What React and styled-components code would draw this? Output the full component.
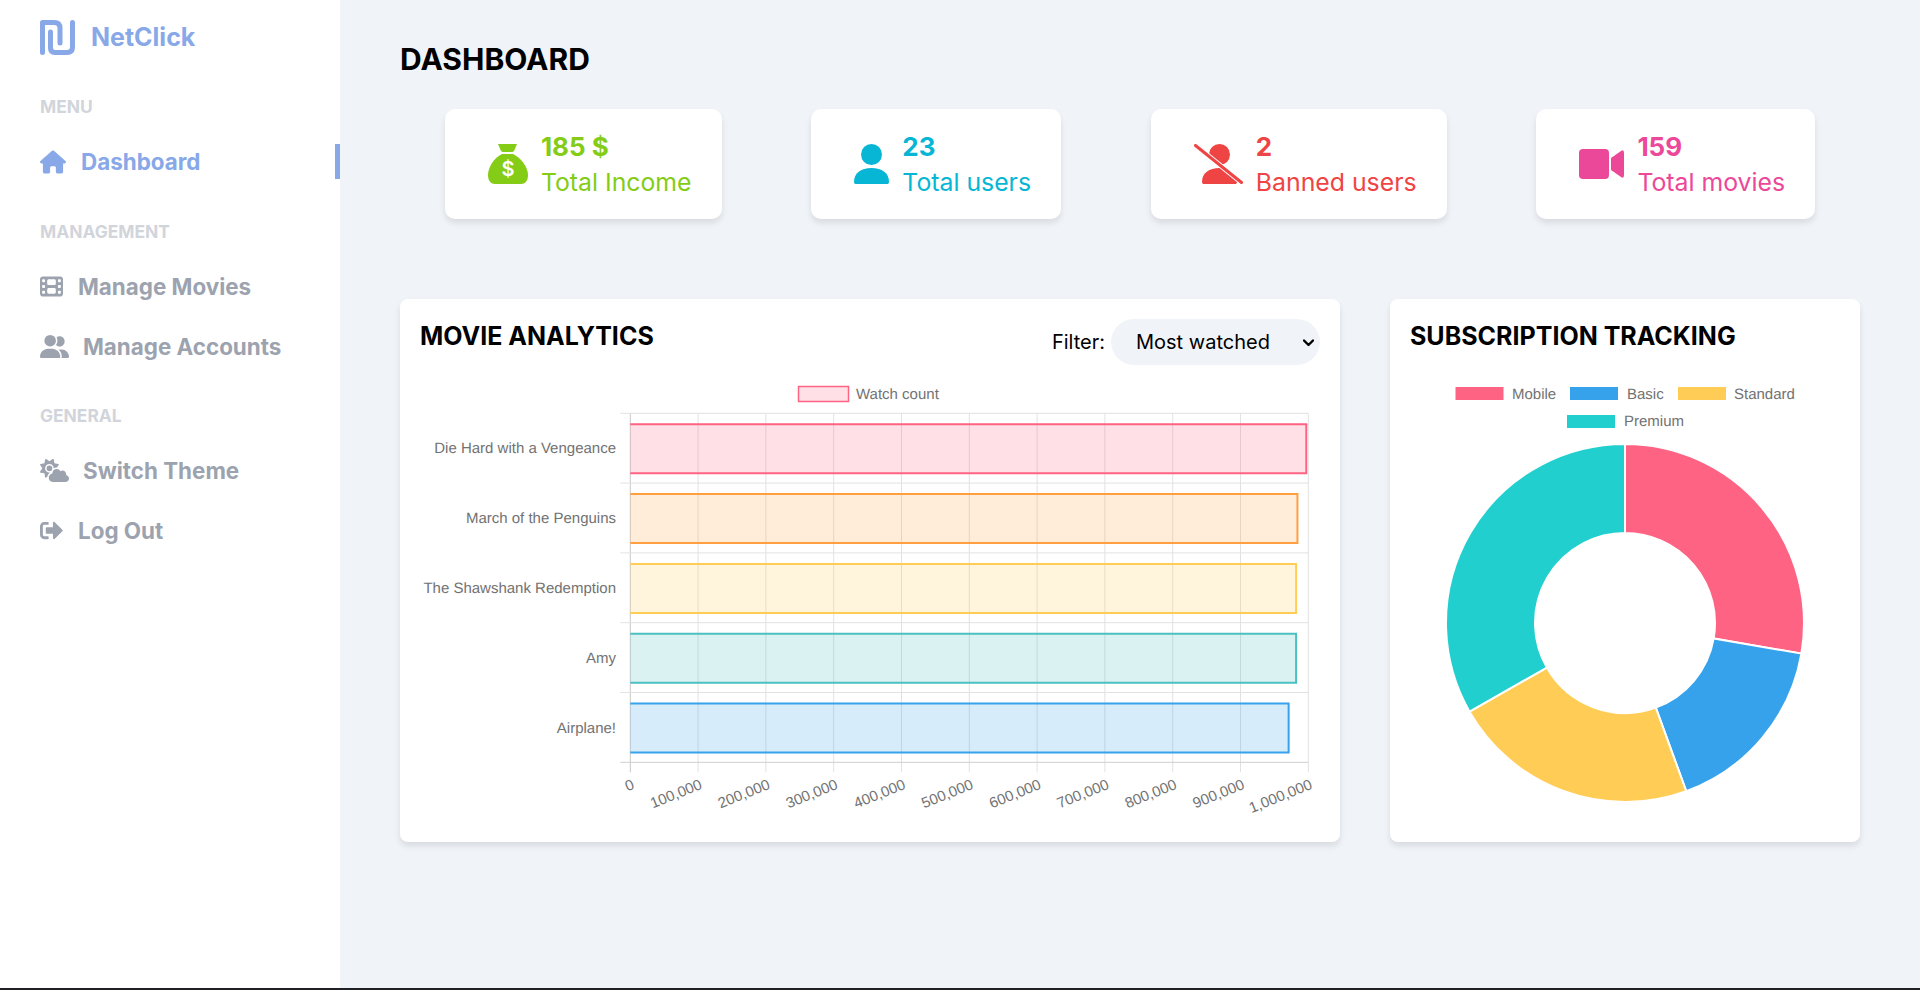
// Imports
import React from 'react';
import styled, { createGlobalStyle } from 'styled-components';
import { FaHouse, FaFilm, FaUserGroup, FaCloudSun } from 'react-icons/fa6';
import { FaSignOutAlt } from 'react-icons/fa';

// Data
const stats = [
	{ id: 1, value: '185 $', label: 'Total Income', color: '#84cc16', icon: 'bag' },
	{ id: 2, value: '23', label: 'Total users', color: '#06b6d4', icon: 'user' },
	{ id: 3, value: '2', label: 'Banned users', color: '#ef4444', icon: 'ban' },
	{ id: 4, value: '159', label: 'Total movies', color: '#ec4899', icon: 'video' },
];

const bars = [
	{ name: 'Die Hard with a Vengeance', value: 997000, rgb: '255,99,132' },
	{ name: 'March of the Penguins', value: 984000, rgb: '255,159,64' },
	{ name: 'The Shawshank Redemption', value: 982000, rgb: '255,205,86' },
	{ name: 'Amy', value: 982000, rgb: '75,192,192' },
	{ name: 'Airplane!', value: 971000, rgb: '54,162,235' },
];

const slices = [
	{ name: 'Mobile', color: '#ff6384', to: 99.85 },
	{ name: 'Basic', color: '#36a2eb', to: 160 },
	{ name: 'Standard', color: '#ffcd56', to: 240.3 },
	{ name: 'Premium', color: '#22cfcf', to: 360 },
];

// Icons
const Logo = () => (
	<svg width="35" height="35" viewBox="0 0 35 35" fill="none" stroke="#88a8e8" strokeWidth="5" strokeLinecap="round" strokeLinejoin="round">
		<path d="M2.5 32.5V2.5H14Q20 2.5 20 8V23" />
		<path d="M32.5 2.5V27Q32.5 32.5 27 32.5H15Q10.5 32.5 10.5 28V12" />
	</svg>
);

const BagIcon = ({ color }) => (
	<svg width="40" height="40" viewBox="0 0 40 40">
		<path fill={ color } d="M10 0H29L26 7C25 8 24 8 23 8H16C15 8 14 8 13 7Z" />
		<path fill={ color } d="M14 10H25C33 14 40 23 40 31C40 37 37 40 33 40H7C3 40 0 37 0 31C0 23 6 14 14 10Z" />
		<StatGlyph x="20" y="32" fill="#fff" textAnchor="middle">$</StatGlyph>
	</svg>
);

const UserIcon = ({ color }) => (
	<svg width="35" height="40" viewBox="0 0 35 40">
		<circle fill={ color } cx="17.5" cy="10.5" r="10.5" />
		<path fill={ color } d="M0 38C0 29 7 24 17.5 24C28 24 35 29 35 38C35 39.5 34 40 33 40H2C1 40 0 39.5 0 38Z" />
	</svg>
);

const BanIcon = ({ color }) => (
	<svg width="49" height="40" viewBox="0 0 49 40">
		<clipPath id="ban-head">
			<path d="M0 -3H49V41Z" />
		</clipPath>
		<clipPath id="ban-body">
			<path d="M0 -1V41H49Z" />
		</clipPath>
		<circle fill={ color } cx="25.5" cy="10.5" r="10.5" clipPath="url(#ban-head)" />
		<path fill={ color } d="M8 38C8 29 15 24 25.5 24C36 24 43 29 43 38C43 39.5 42 40 41 40H10C9 40 8 39.5 8 38Z" clipPath="url(#ban-body)" />
		<path stroke="#fff" strokeWidth="5" d="M1.5 1.5L47.5 38.5" />
		<path stroke={ color } strokeWidth="3" strokeLinecap="round" d="M1.5 1.5L47.5 38.5" />
	</svg>
);

const VideoIcon = ({ color }) => (
	<svg width="45" height="30" viewBox="0 0 45 30">
		<rect fill={ color } width="30" height="30" rx="4" />
		<path fill={ color } d="M32 9L42 2Q45 0 45 4V26Q45 30 42 28L32 21Z" />
	</svg>
);

const statIcon = (icon, color) => {
	if (icon === 'bag') return <BagIcon color={ color } />;
	if (icon === 'user') return <UserIcon color={ color } />;
	if (icon === 'ban') return <BanIcon color={ color } />;
	return <VideoIcon color={ color } />;
};

// Charts
const polar = (cx, cy, r, deg) => {
	const rad = (deg - 90) * Math.PI / 180;
	return [cx + r * Math.cos(rad), cy + r * Math.sin(rad)];
};

const slicePath = (cx, cy, outer, inner, from, to) => {
	const [x1, y1] = polar(cx, cy, outer, from);
	const [x2, y2] = polar(cx, cy, outer, to);
	const [x3, y3] = polar(cx, cy, inner, to);
	const [x4, y4] = polar(cx, cy, inner, from);
	const large = to - from > 180 ? 1 : 0;
	return `M${x1} ${y1}A${outer} ${outer} 0 ${large} 1 ${x2} ${y2}L${x3} ${y3}A${inner} ${inner} 0 ${large} 0 ${x4} ${y4}Z`;
};

const BarChart = () => {
	const left = 210.3;
	const right = 888.3;
	const top = 38.3;
	const rowH = 69.8;
	const bottom = top + rowH * 5;
	const step = (right - left) / 10;
	const ticks = Array.from({ length: 11 }, (_, i) => i);
	const rows = Array.from({ length: 6 }, (_, i) => i);
	return (
		<ChartSvg width="900" height="465" viewBox="0 0 900 465">
			<rect x="378.5" y="11.5" width="50" height="15" fill="rgba(255,99,132,.2)" stroke="rgb(255,99,132)" strokeWidth="1.5" />
			<ChartText x="436" y="24">Watch count</ChartText>
			{ ticks.map((i) => (
				<line key={ i } x1={ left + i * step } x2={ left + i * step } y1={ top } y2={ bottom + 10 } stroke={ i === 0 ? '#c8c8c8' : '#e2e2e2' } />
			)) }
			{ rows.map((i) => (
				<line key={ i } x1={ left - 10 } x2={ right } y1={ top + i * rowH } y2={ top + i * rowH } stroke={ i === 5 ? '#cfcfcf' : '#e2e2e2' } />
			)) }
			{ bars.map((bar, i) => {
				const y = top + i * rowH + 11;
				const w = (right - left) * bar.value / 1000000;
				return (
					<g key={ bar.name }>
						<rect x={ left } y={ y } width={ w } height={ 49 } fill={ `rgba(${bar.rgb},.2)` } />
						<path d={ `M${left} ${y}H${left + w}V${y + 49}H${left}` } fill="none" stroke={ `rgb(${bar.rgb})` } strokeWidth="2" />
						<ChartText x="196" y={ y + 29 } textAnchor="end">{ bar.name }</ChartText>
					</g>
				);
			}) }
			{ ticks.map((i) => (
				<ChartText key={ i } x={ left + i * step + 5 } y={ bottom + 26 } textAnchor="end" transform={ `rotate(-22 ${left + i * step + 5} ${bottom + 26})` }>
					{ (i * 100000).toLocaleString('en-US') }
				</ChartText>
			)) }
		</ChartSvg>
	);
};

const DonutChart = () => {
	let from = 0;
	return (
		<ChartSvg width="430" height="465" viewBox="0 0 430 465">
			<rect x="45.5" y="12" width="48" height="13" fill="#ff6384" />
			<ChartText x="102" y="24">Mobile</ChartText>
			<rect x="160" y="12" width="48" height="13" fill="#36a2eb" />
			<ChartText x="217" y="24">Basic</ChartText>
			<rect x="268" y="12" width="48" height="13" fill="#ffcd56" />
			<ChartText x="324" y="24">Standard</ChartText>
			<rect x="157" y="40" width="48" height="13" fill="#22cfcf" />
			<ChartText x="214" y="51">Premium</ChartText>
			{ slices.map((slice) => {
				const d = slicePath(215, 248, 179, 90, from, slice.to);
				from = slice.to;
				return <path key={ slice.name } d={ d } fill={ slice.color } stroke="#fff" strokeWidth="2" />;
			}) }
		</ChartSvg>
	);
};

// Component
const App = () => {
	return (
		<Page>
			<GlobalStyle />
			<Sidebar>
				<Brand>
					<Logo />
					<BrandName>NetClick</BrandName>
				</Brand>
				<SectionLabel>Menu</SectionLabel>
				<NavItem $active $gap={ 15 }><FaHouse size={ 26 } />Dashboard</NavItem>
				<SectionLabel>Management</SectionLabel>
				<NavItem $gap={ 15 }><FaFilm size={ 23 } />Manage Movies</NavItem>
				<NavItem $gap={ 14 }><FaUserGroup size={ 29 } />Manage Accounts</NavItem>
				<SectionLabel>General</SectionLabel>
				<NavItem $gap={ 14 }><FaCloudSun size={ 29 } />Switch Theme</NavItem>
				<NavItem $gap={ 15 }><FaSignOutAlt size={ 23 } />Log Out</NavItem>
			</Sidebar>
			<Main>
				<PageTitle>DASHBOARD</PageTitle>
				<StatRow>
					{ stats.map((stat) => (
						<StatCard key={ stat.id } $color={ stat.color }>
							{ statIcon(stat.icon, stat.color) }
							<div>
								<StatValue>{ stat.value }</StatValue>
								<StatLabel>{ stat.label }</StatLabel>
							</div>
						</StatCard>
					)) }
				</StatRow>
				<PanelGrid>
					<Panel>
						<PanelHeader>
							<PanelTitle>MOVIE ANALYTICS</PanelTitle>
							<FilterBox>
								Filter:
								<SelectWrap>
									<FilterSelect defaultValue="watched">
										<option value="watched">Most watched</option>
										<option value="rated">Top rated</option>
									</FilterSelect>
									<Chevron width="11" height="8" viewBox="0 0 11 8">
										<path d="M1 1.5L5.5 6L10 1.5" fill="none" stroke="#000" strokeWidth="2.4" strokeLinecap="round" strokeLinejoin="round" />
									</Chevron>
								</SelectWrap>
							</FilterBox>
						</PanelHeader>
						<BarChart />
					</Panel>
					<Panel>
						<PanelHeader>
							<PanelTitle>SUBSCRIPTION TRACKING</PanelTitle>
						</PanelHeader>
						<DonutChart />
					</Panel>
				</PanelGrid>
			</Main>
		</Page>
	);
};

// Styled
const GlobalStyle = createGlobalStyle`
	* {
		box-sizing: border-box;
	}
	body {
		margin: 0;
		font-family: 'Inter', 'Liberation Sans', sans-serif;
		background: #f0f4f9;
	}
`;

const Page = styled.div`
	display: flex;
	height: 990px;
	border-bottom: 2px solid #202124;
	overflow: hidden;
`;

const Sidebar = styled.aside`
	width: 340px;
	flex-shrink: 0;
	background: #fff;
	padding: 19px 0 0 40px;
`;

const Brand = styled.div`
	display: flex;
	align-items: center;
	gap: 16px;
	height: 36px;
	margin-bottom: 42px;
`;

const BrandName = styled.span`
	font-size: 25px;
	font-weight: 700;
	color: #88a8e8;
`;

const SectionLabel = styled.div`
	font-size: 17.4px;
	font-weight: 700;
	line-height: 20px;
	color: #d1d5db;
	text-transform: uppercase;
	margin: 42px 0 26.5px;
`;

const NavItem = styled.div`
	position: relative;
	display: flex;
	align-items: center;
	gap: ${ (props) => props.$gap }px;
	height: 36px;
	font-size: 22.4px;
	font-weight: 700;
	color: ${ (props) => props.$active ? '#88a8e8' : '#9ca3af' };
	& + & {
		margin-top: 24px;
	}
	&::after {
		content: '';
		display: ${ (props) => props.$active ? 'block' : 'none' };
		position: absolute;
		right: 0;
		top: 0;
		width: 5px;
		height: 35px;
		background: #88a8e8;
	}
`;

const Main = styled.main`
	flex: 1;
	padding: 44px 60px 0;
`;

const PageTitle = styled.h1`
	margin: 0;
	font-size: 30px;
	line-height: 30px;
	font-weight: 700;
	color: #000;
`;

const StatRow = styled.div`
	display: flex;
	justify-content: space-around;
	margin-top: 35px;
`;

const StatCard = styled.div`
	display: flex;
	align-items: center;
	gap: 13px;
	height: 110px;
	padding: 0 30px 0 43px;
	background: #fff;
	border-radius: 10px;
	box-shadow: 0 4px 6px rgba(0, 0, 0, .1);
	color: ${ (props) => props.$color };
`;

const StatGlyph = styled.text`
	font-family: 'Inter', sans-serif;
	font-size: 20px;
	font-weight: 600;
`;

const StatValue = styled.div`
	font-size: 26px;
	line-height: 36px;
	font-weight: 700;
`;

const StatLabel = styled.div`
	font-size: 24.8px;
	line-height: 34px;
`;

const PanelGrid = styled.div`
	display: grid;
	grid-template-columns: 2fr 1fr;
	gap: 50px;
	margin-top: 80px;
`;

const Panel = styled.section`
	height: 543px;
	padding: 20px;
	background: #fff;
	border-radius: 8px;
	box-shadow: 0 4px 6px rgba(0, 0, 0, .1);
`;

const PanelHeader = styled.div`
	display: flex;
	align-items: flex-start;
	justify-content: space-between;
	height: 56px;
`;

const PanelTitle = styled.h2`
	margin: 0;
	font-size: 25px;
	line-height: 34px;
	font-weight: 700;
	color: #000;
`;

const FilterBox = styled.label`
	display: flex;
	align-items: center;
	gap: 6px;
	font-size: 20px;
	color: #000;
`;

const SelectWrap = styled.div`
	position: relative;
`;

const FilterSelect = styled.select`
	display: block;
	width: 209px;
	height: 46px;
	padding: 0 24px 0 25px;
	border: none;
	border-radius: 23px;
	background: #f0f4f9;
	color: #000;
	font-family: inherit;
	font-size: 20px;
	appearance: none;
`;

const Chevron = styled.svg`
	position: absolute;
	right: 6px;
	top: 20px;
	pointer-events: none;
`;

const ChartSvg = styled.svg`
	display: block;
`;

const ChartText = styled.text`
	font-family: 'Liberation Sans', Arial, sans-serif;
	font-size: 15px;
	fill: #727272;
	text-rendering: geometricPrecision;
`;

// Export
export default App;
